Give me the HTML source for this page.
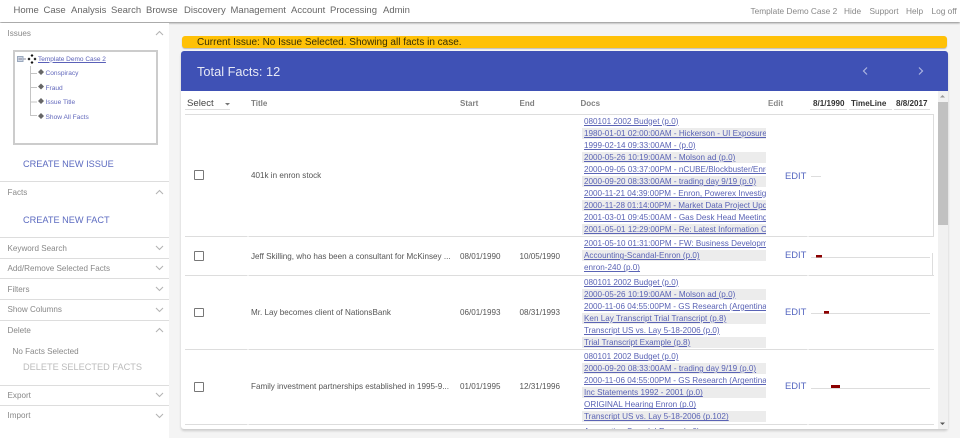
<!DOCTYPE html>
<html><head><meta charset="utf-8"><title>Facts</title>
<style>
html,body{margin:0;padding:0;width:960px;height:438px;overflow:hidden;background:#f4f4f4;font-family:"Liberation Sans",Arial,sans-serif}
#w{position:relative;width:960px;height:438px;overflow:hidden;filter:blur(.3px)}
.b{position:absolute}
.t{position:absolute;line-height:0;white-space:nowrap}
.n{font-size:9.5px;color:#666;top:11px}
.r{font-size:8.3px;color:#888;top:11px}
.s{font-size:8.1px;color:#888;left:7.5px}
.a{font-size:9.2px;color:#5c6bc0;left:23px}
.h{font-size:8px;font-weight:bold;color:#808080;top:104px}
.k{font-size:8.1px;font-weight:bold;color:#333;top:104px}
.c{font-size:8.1px;color:#555}
.e{font-size:9.4px;color:#5567c0;left:785px}
.l{font-size:6.6px;color:#6268bc;left:45.5px}
.x{position:absolute;left:194px;width:7.5px;height:7.5px;border:1.7px solid #777;border-radius:1px;background:#fff}
.d{position:absolute;left:582px;width:184px;overflow:hidden}
.d a{display:block;height:11px;margin-bottom:1.1px;line-height:11px;padding-left:2px;font-size:8.15px;color:#5a63b5;text-decoration:underline;white-space:nowrap;overflow:hidden}
.d a:nth-child(even){background:#ececec}
</style></head><body><div id="w">
<div class="b" style="left:0;top:0;width:960px;height:22px;background:#fff;box-shadow:0 1px 2px #888"></div>
<span class="t n" style="left:13.5px">Home</span><span class="t n" style="left:43.5px">Case</span><span class="t n" style="left:71px">Analysis</span><span class="t n" style="left:111px">Search</span><span class="t n" style="left:146px">Browse</span><span class="t n" style="left:184px">Discovery</span><span class="t n" style="left:230.5px">Management</span><span class="t n" style="left:291px">Account</span><span class="t n" style="left:330px">Processing</span><span class="t n" style="left:383px">Admin</span>
<span class="t r" style="left:750.5px">Template Demo Case 2</span><span class="t r" style="left:844px">Hide</span><span class="t r" style="left:869.5px">Support</span><span class="t r" style="left:906px">Help</span><span class="t r" style="left:931.5px">Log off</span>

<div class="b" style="left:0;top:23px;width:169px;height:415px;background:#fff"></div>
<span class="t s" style="top:33.7px">Issues</span>
<div class="b" style="left:13px;top:50px;width:141px;height:91px;border:2px solid #ccc;background:#fff"></div>
<span class="t" style="left:38px;top:59.5px;font-size:6.5px;color:#5a60b8;text-decoration:underline">Template Demo Case 2</span>
<span class="t l" style="top:74px">Conspiracy</span><span class="t l" style="top:88.5px">Fraud</span><span class="t l" style="top:103px">Issue Title</span><span class="t l" style="top:117.5px">Show All Facts</span>
<span class="t a" style="top:164px">CREATE NEW ISSUE</span>
<span class="t s" style="top:192.7px">Facts</span>
<span class="t a" style="top:219.5px">CREATE NEW FACT</span>
<span class="t s" style="top:248.5px">Keyword Search</span>
<span class="t s" style="top:268.5px">Add/Remove Selected Facts</span>
<span class="t s" style="top:289.5px">Filters</span>
<span class="t s" style="top:310px">Show Columns</span>
<span class="t s" style="top:330.5px">Delete</span>
<span class="t s" style="top:351.5px;left:12.5px">No Facts Selected</span>
<span class="t" style="left:23px;top:367px;font-size:9.2px;color:#bbb">DELETE SELECTED FACTS</span>
<span class="t s" style="top:395.5px">Export</span>
<span class="t s" style="top:416px">Import</span>

<div class="b" style="left:182px;top:36px;width:765px;height:12px;background:#ffc107;border-radius:3px;box-shadow:0 1px 1px #bbb"></div>
<span class="t" style="left:197px;top:42.6px;font-size:10px;color:#3a3000">Current Issue: No Issue Selected. Showing all facts in case.</span>

<div class="b" style="left:181px;top:51px;width:767px;height:378px;background:#fff;border-radius:3px;box-shadow:0 2px 2px #ccc"></div>
<div class="b" style="left:181px;top:51px;width:767px;height:40px;background:#3f51b5;border-radius:3px 3px 0 0"></div>
<span class="t" style="left:197px;top:71.5px;font-size:12.8px;color:#e6e8f5">Total Facts: 12</span>

<div class="b" style="left:938px;top:91px;width:9.5px;height:338px;background:#f1f1f1"></div>
<div class="b" style="left:938px;top:102px;width:9.5px;height:123px;background:#c1c1c1"></div>

<span class="t" style="left:187px;top:104px;font-size:9.6px;color:#444">Select</span>
<span class="t h" style="left:251px">Title</span><span class="t h" style="left:460px">Start</span><span class="t h" style="left:519.5px">End</span><span class="t h" style="left:580.5px">Docs</span><span class="t h" style="left:768px;color:#888">Edit</span>
<span class="t k" style="left:813px">8/1/1990</span><span class="t k" style="left:851px">TimeLine</span><span class="t k" style="left:896px">8/8/2017</span>

<div class="d" style="top:115.5px;height:121px">
<a>080101 2002 Budget (p.0)</a><a>1980-01-01 02:00:00AM - Hickerson - UI Exposure</a><a>1999-02-14 09:33:00AM -  (p.0)</a><a>2000-05-26 10:19:00AM - Molson ad (p.0)</a><a>2000-09-05 03:37:00PM - nCUBE/Blockbuster/Enron</a><a>2000-09-20 08:33:00AM - trading day 9/19 (p.0)</a><a>2000-11-21 04:39:00PM - Enron, Powerex Investigation</a><a>2000-11-28 01:14:00PM - Market Data Project Update</a><a>2001-03-01 09:45:00AM - Gas Desk Head Meeting</a><a>2001-05-01 12:29:00PM - Re: Latest Information Center</a>
</div>
<div class="d" style="top:238px;height:37px">
<a>2001-05-10 01:31:00PM - FW: Business Development</a><a>Accounting-Scandal-Enron (p.0)</a><a>enron-240 (p.0)</a>
</div>
<div class="d" style="top:276.5px;height:73px">
<a>080101 2002 Budget (p.0)</a><a>2000-05-26 10:19:00AM - Molson ad (p.0)</a><a>2000-11-06 04:55:00PM - GS Research (Argentina)</a><a>Ken Lay Transcript Trial Transcript (p.8)</a><a>Transcript US vs. Lay 5-18-2006 (p.0)</a><a>Trial Transcript Example (p.8)</a>
</div>
<div class="d" style="top:351px;height:73px">
<a>080101 2002 Budget (p.0)</a><a>2000-09-20 08:33:00AM - trading day 9/19 (p.0)</a><a>2000-11-06 04:55:00PM - GS Research (Argentina)</a><a>Inc Statements 1992 - 2001 (p.0)</a><a>ORIGINAL Hearing Enron (p.0)</a><a>Transcript US vs. Lay 5-18-2006 (p.102)</a>
</div>
<div class="d" style="top:425.5px;height:3.5px"><a>Accounting-Scandal-Enron (p.0)</a></div>

<div class="x" style="top:170px"></div><div class="x" style="top:251px"></div><div class="x" style="top:307.5px"></div><div class="x" style="top:382px"></div>
<span class="t c" style="left:251px;top:175.7px">401k in enron stock</span>
<span class="t c" style="left:251px;top:256.7px">Jeff Skilling, who has been a consultant for McKinsey ...</span><span class="t c" style="left:460px;top:256.7px">08/01/1990</span><span class="t c" style="left:519.5px;top:256.7px">10/05/1990</span>
<span class="t c" style="left:251px;top:312.7px">Mr. Lay becomes client of NationsBank</span><span class="t c" style="left:460px;top:312.7px">06/01/1993</span><span class="t c" style="left:519.5px;top:312.7px">08/31/1993</span>
<span class="t c" style="left:251px;top:387.2px">Family investment partnerships established in 1995-9...</span><span class="t c" style="left:460px;top:387.2px">01/01/1995</span><span class="t c" style="left:519.5px;top:387.2px">12/31/1996</span>
<span class="t e" style="top:175.6px">EDIT</span><span class="t e" style="top:255px">EDIT</span><span class="t e" style="top:312px">EDIT</span><span class="t e" style="top:386px">EDIT</span>

<svg class="b" style="left:0;top:0" width="960" height="438" viewBox="0 0 960 438" fill="none">
<g stroke="#ddd"><path d="M0 181.500H169M0 237.500H169M0 258.500H169M0 278.500H169M0 299.500H169M0 320.500H169M0 385.500H169M0 405.500H169"/></g>
<g stroke="#b5b5b5" stroke-width="1.100"><path d="M156 35l3.500-3.500 3.500 3.500M156 194l3.500-3.500 3.500 3.500M156 332l3.500-3.500 3.500 3.500"/><path d="M156 246l3.500 3.500 3.500-3.500M156 266l3.500 3.500 3.500-3.500M156 287l3.500 3.500 3.500-3.500M156 308l3.500 3.500 3.500-3.500M156 393l3.500 3.500 3.500-3.500M156 414l3.500 3.500 3.500-3.500"/></g>
<!-- tree -->
<rect x="17.500" y="56.500" width="5.500" height="5" fill="#cfd8e6" stroke="#9aa8bd"/><path d="M18.500 59h3.500M23.500 59h2.500" stroke="#889"/>
<path d="M32 54l1.500 1.500-1.500 1.500-1.500-1.500zM29 57.500l1.500 1.500-1.500 1.500-1.500-1.500zM35 57.500l1.500 1.500-1.500 1.500-1.500-1.500zM32 61l1.500 1.500-1.500 1.500-1.500-1.500z" fill="#111"/>
<g stroke="#c4c4c4"><path d="M30.500 66V115.500H37M30.500 73.500H37M30.500 87.500H37M30.500 102H37"/></g>
<g fill="#666"><path d="M41 69l3 3-3 3-3-3zM41 83.500l3 3-3 3-3-3zM41 98l3 3-3 3-3-3zM41 113l3 3-3 3-3-3z"/></g>
<!-- nav arrows -->
<g stroke="#aeb6e0" stroke-width="1.200"><path d="M867 67.500l-3.500 3.500 3.500 3.500M919 67.500l3.500 3.500-3.500 3.500"/></g>
<!-- dropdown, scroll arrows -->
<path d="M225 103h5l-2.500 2.500z" fill="#777"/>
<path d="M940 97.500h5l-2.500-2.500z" fill="#999"/><path d="M940 422.500h5l-2.500 2.500z" fill="#555"/>
<!-- table lines -->
<g stroke="#ddd"><path d="M185 114.500H934M185 236.500H934M185 275.500H934M185 349.500H934M185 424.500H934"/>
<path d="M933.500 114V237M932.500 253V275"/>
<path d="M811 176.500H821M811 257.500H930M811 313.500H930M811 388.500H930"/>
<path d="M185 109.500H230M810 109.500H847M849 109.500H892M894 109.500H930"/></g>
<g stroke="#fff"><path d="M248 236v1M808 236v1M248 275v1M808 275v1M248 349v1M808 349v1M248 424v1M808 424v1"/></g>
<g fill="#8b0000"><rect x="816" y="255" width="6" height="2.500"/><rect x="824" y="311" width="5" height="2.700"/><rect x="831" y="385" width="9" height="3"/></g>
</svg>
</div></body></html>
